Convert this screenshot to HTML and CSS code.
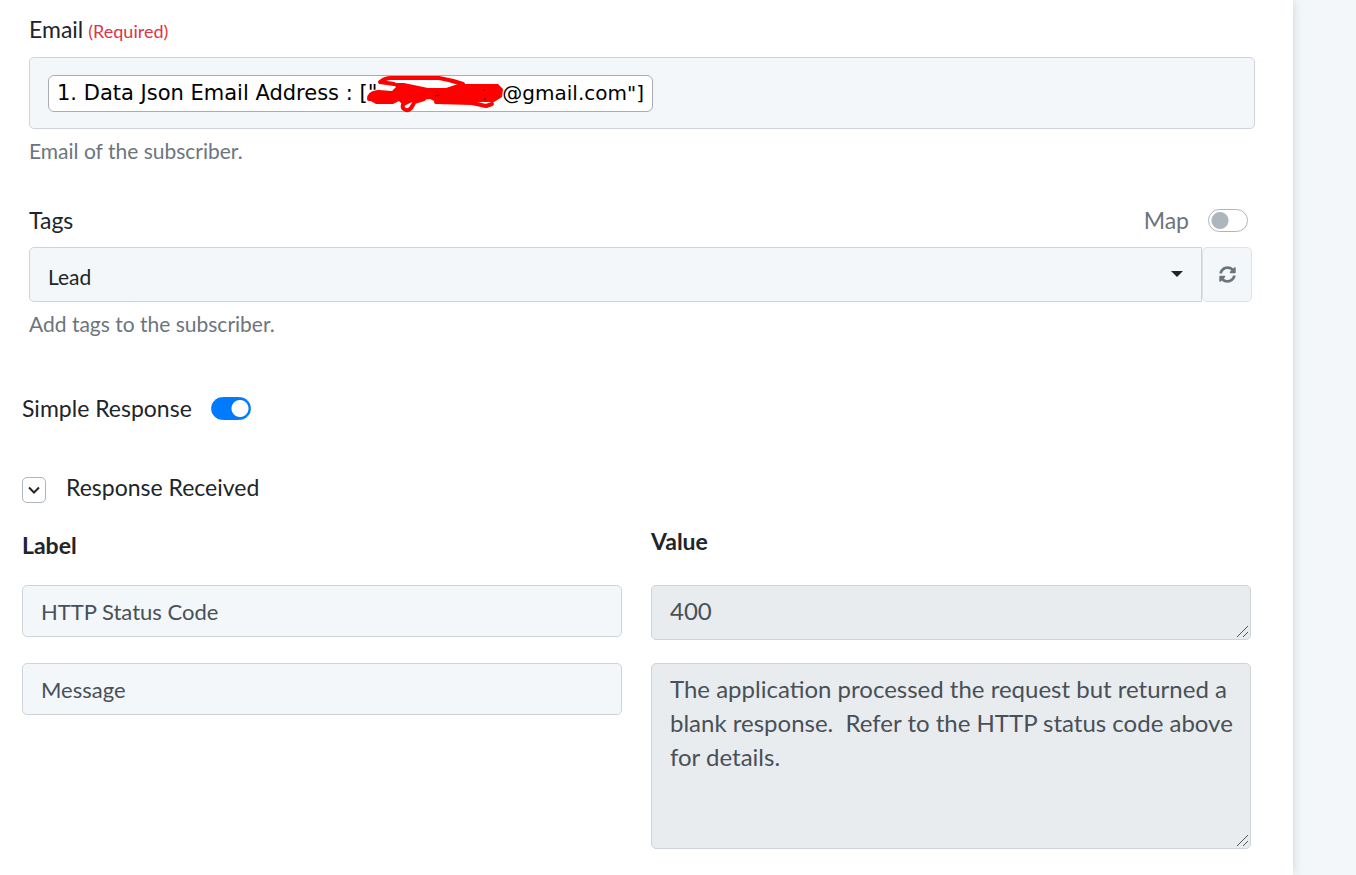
FILE: index.html
```html
<!DOCTYPE html>
<html lang="en">
<head>
<meta charset="utf-8">
<title>Action setup</title>
<link rel="stylesheet" href="styles.css">
</head>
<body>
<main class="panel">
  <section class="field field-email">
    <div class="field-head"><span class="title" id="email-label">Email</span><span class="required">(Required)</span></div>
    <div class="token-box" role="textbox" aria-labelledby="email-label" tabindex="0">
      <span class="token"><span>1. Data Json Email Address : ["</span><svg class="scribble" viewBox="0 0 140 40" aria-hidden="true"><path d="M3 22L13 17 26 18 30 14 25 10 38 10 62 15 80 15 92 11 132 11 137 16 136 24 128 29 115 29 104 30 72 30 64 26 54 27 46 29 38 33 33 28 27 31 10 31 3 27Z" fill="#f00"/><path d="M14 9Q19 5 25 5H73Q85 7 97 11M14 9L28 11M3 26Q3 20 12 19M4 26L24 20M42 25Q34 33 38 36T45 35 48 29L58 26M70 29L106 30 120 33 126 31M100 13H130" fill="none" stroke="#f00" stroke-width="4" stroke-linecap="round" stroke-linejoin="round"/><path d="M69 23L73 22M117 17H119M118 26H120" fill="none" stroke="#311" stroke-width="1"/></svg><span class="token-tail">@gmail.com"]</span></span>
    </div>
    <p class="hint">Email of the subscriber.</p>
  </section>

  <section class="field field-tags">
    <div class="field-head split">
      <label class="title" for="tags">Tags</label>
      <label class="switch-label muted">Map <input class="switch" type="checkbox"></label>
    </div>
    <div class="select-row">
      <div class="select-wrap">
        <select class="select" id="tags"><option>Lead</option></select>
        <svg class="caret" viewBox="0 0 12 6" aria-hidden="true"><path d="M0 0H12L6 6Z" fill="#212529"/></svg>
      </div>
      <button class="refresh" type="button" aria-label="Refresh tags">
        <svg viewBox="0 0 512 512" aria-hidden="true"><path fill="#6c757d" d="M370.72 133.28C339.458 104.008 298.888 87.962 255.848 88c-77.458.068-144.328 53.178-162.791 126.85-1.344 5.363-6.122 9.15-11.651 9.15H24.103c-7.498 0-13.194-6.807-11.807-14.176C33.933 94.924 134.813 8 256 8c66.448 0 126.791 26.136 171.315 68.685L463.03 40.97C478.149 25.851 504 36.559 504 57.941V192c0 13.255-10.745 24-24 24H345.941c-21.382 0-32.09-25.851-16.971-40.971l41.75-41.749zM32 296h134.059c21.382 0 32.09 25.851 16.971 40.971l-41.75 41.75c31.262 29.273 71.835 45.319 114.876 45.28 77.418-.07 144.315-53.144 162.787-126.849 1.344-5.363 6.122-9.15 11.651-9.15h57.304c7.498 0 13.194 6.807 11.807 14.176C478.067 417.076 377.187 504 256 504c-66.448 0-126.791-26.136-171.315-68.685L48.97 471.03C33.851 486.149 8 475.441 8 454.059V320c0-13.255 10.745-24 24-24z"/></svg>
      </button>
    </div>
    <p class="hint">Add tags to the subscriber.</p>
  </section>

  <label class="switch-label simple">Simple Response <input class="switch" type="checkbox" checked></label>

  <div class="response-head">
    <button class="toggle" type="button" aria-label="Toggle response" aria-expanded="true"><svg viewBox="0 0 12 8" aria-hidden="true"><path d="M1 1.500L6 6.500 11 1.500" fill="none" stroke="#212529" stroke-width="2"/></svg></button>
    <span>Response Received</span>
  </div>

  <div class="response-grid">
    <div class="col-title col-title-label" id="col-label">Label</div>
    <div class="col-title" id="col-value">Value</div>
    <input class="control" type="text" value="HTTP Status Code" aria-labelledby="col-label">
    <textarea class="control area" rows="1" readonly aria-labelledby="col-value">400</textarea>
    <input class="control" type="text" value="Message" aria-labelledby="col-label">
    <textarea class="control area area-tall" readonly aria-labelledby="col-value">The application processed the request but returned a blank response.  Refer to the HTTP status code above for details.</textarea>
  </div>
</main>
</body>
</html>
```
FILE: styles.css
```css
* { box-sizing: border-box; }

body {
  margin: 0;
  background: #f3f7fa;
  color: #212529;
  font-family: Lato, "Liberation Sans", sans-serif;
  font-size: 23px;
  line-height: 34px;
}

button, input, select, textarea { font: inherit; margin: 0; }

.panel {
  min-height: 100vh;
  margin-right: 63px;
  padding: 12px 42px 26px 22px;
  background: #fff;
  box-shadow: 0 0 10px rgba(60, 80, 90, 0.2);
}

.field { padding-left: 7px; }
.field-email { margin-right: -4px; }
.field-tags { margin-top: 35px; margin-right: -1px; }

.field-head {
  display: flex;
  align-items: baseline;
  gap: 5px;
  margin-bottom: 9px;
}

.split {
  justify-content: space-between;
  margin-bottom: 10px;
  padding-right: 4px;
}

.required { color: #dc3545; font-size: 18px; }

.token-box {
  display: flex;
  align-items: center;
  height: 72px;
  padding: 0 18px;
  background: #f3f7fa;
  border: 1px solid #ced4da;
  border-radius: 5px;
}

.token {
  display: flex;
  align-items: center;
  height: 37px;
  padding: 0 8px;
  background: #fff;
  border: 1px solid #a9adb1;
  border-radius: 6px;
  color: #000;
  font-family: "DejaVu Sans", sans-serif;
  font-size: 21px;
  white-space: nowrap;
}

.token-tail { font-size: 20px; }

.scribble {
  flex: none;
  width: 140px;
  height: 40px;
  margin: 0 -4px 0 -11px;
}

.hint {
  margin: 5px 0 0;
  color: #6c757d;
  font-size: 21px;
}

.switch-label {
  display: inline-flex;
  align-items: center;
  gap: 19px;
}

.muted { color: #6c757d; }

.switch {
  appearance: none;
  width: 40px;
  height: 23px;
  border: 1px solid #adb5bd;
  border-radius: 12px;
  background: radial-gradient(circle at 11px 50%, #adb5bd 8px, #fff 9px);
}

.switch:checked {
  border-color: #007bff;
  background: radial-gradient(circle at 28px 50%, #fff 8px, #007bff 9px);
}

.select-row { display: flex; }
.select-wrap { position: relative; flex: 1; }

.select {
  appearance: none;
  display: block;
  width: 100%;
  height: 55px;
  padding: 4px 18px 0;
  background: #f3f7fa;
  border: 1px solid #ced4da;
  border-radius: 5px 0 0 5px;
  color: #212529;
  font-size: 21px;
}

.caret {
  position: absolute;
  top: 24px;
  right: 19px;
  width: 12px;
  height: 6px;
  pointer-events: none;
}

.refresh {
  display: flex;
  align-items: center;
  justify-content: center;
  width: 50px;
  background: #f3f7fa;
  border: 1px solid #dee2e6;
  border-radius: 5px;
}

.refresh svg { width: 17px; height: 17px; }

.simple { margin-top: 50px; }

.response-head {
  display: flex;
  align-items: center;
  gap: 20px;
  margin-top: 45px;
}

.toggle {
  display: flex;
  align-items: center;
  justify-content: center;
  width: 24px;
  height: 26px;
  margin-top: 5px;
  padding: 0;
  background: #fff;
  border: 1px solid #adb5bd;
  border-radius: 5px;
}

.toggle svg { width: 12px; height: 8px; }

.response-grid {
  display: grid;
  grid-template-columns: 1fr 1fr;
  gap: 23px 29px;
  align-items: start;
  margin-top: 20px;
}

.col-title { height: 38px; font-weight: 700; }
.col-title-label { padding-top: 4px; }

.control {
  display: block;
  width: 100%;
  height: 52px;
  padding: 8px 18px;
  background: #f3f7fa;
  border: 1px solid #ced4da;
  border-radius: 5px;
  color: #495057;
  font-size: 22px;
}

.area {
  height: 55px;
  padding-right: 12px;
  background: #e8ecef;
  font-size: 24px;
  resize: vertical;
  overflow: hidden;
}

.area::-webkit-resizer {
  background: url("data:image/svg+xml,%3Csvg xmlns='http://www.w3.org/2000/svg' width='15' height='15'%3E%3Cpath d='M2 13L13 2M8 13L13 8' fill='none' stroke='%23555'/%3E%3C/svg%3E") no-repeat;
}

.area-tall { height: 186px; }
```
